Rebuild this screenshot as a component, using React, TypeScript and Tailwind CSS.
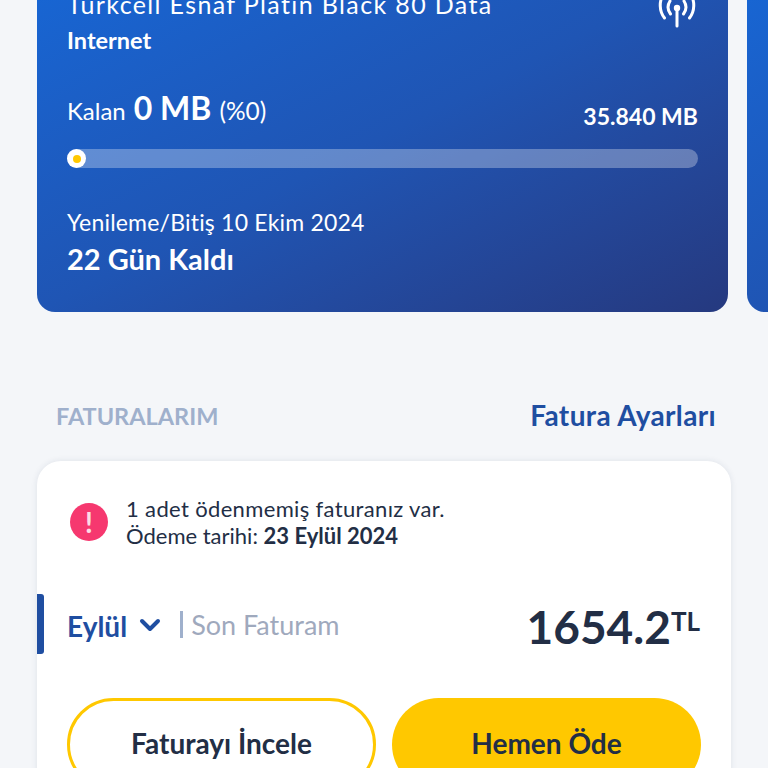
import { ChevronDown } from "lucide-react";

const fontStack = { fontFamily: "Lato, 'Noto Sans', sans-serif" };

function SignalIcon() {
  return (
    <svg width="38" height="34" viewBox="0 0 38 34" fill="none" stroke="white" strokeWidth="3" strokeLinecap="round">
      <path d="M19 13V30" />
      <circle cx="19" cy="12" r="3.2" fill="white" stroke="none" />
      <path d="M12.5 18C9.5 14 9.5 9 12 5" />
      <path d="M25.5 18C28.5 14 28.5 9 26 5" />
      <path d="M6.5 22C1 15 1 5 5.5 -2" />
      <path d="M31.5 22C37 15 37 5 32.5 -2" />
    </svg>
  );
}

function PackageCard() {
  return (
    <div className="h-[352px] w-[691px] shrink-0 rounded-b-[18px] bg-gradient-to-br from-[#1667d6] via-[#1f55b4] to-[#25397f] px-[30px] pt-[29px] text-white">
      <div className="flex items-start justify-between">
        <div>
          <p className="text-[25px] leading-[30px] tracking-[1.37px]">Turkcell Esnaf Platin Black 80 Data</p>
          <p className="mt-[6px] text-[23.5px] font-bold leading-[30px]">Internet</p>
        </div>
        <div className="mr-[2px] mt-[7px]">
          <SignalIcon />
        </div>
      </div>
      <div className="mt-[31px] flex items-end justify-between">
        <div className="flex items-baseline gap-[8px]">
          <span className="text-[24px]">Kalan</span>
          <span className="text-[32px] font-bold leading-[44px]">0 MB</span>
          <span className="text-[24.5px]">(%0)</span>
        </div>
        <span className="mb-[-2px] text-[23px] font-bold leading-[32px]">35.840 MB</span>
      </div>
      <div className="mt-[19px] h-[19px] w-full rounded-full bg-white/30">
        <div className="flex h-[19px] w-[19px] items-center justify-center rounded-full bg-white">
          <div className="h-[8px] w-[8px] rounded-full bg-[#ffc800]" />
        </div>
      </div>
      <p className="mt-[38px] text-[23px] leading-[32px] tracking-[0.2px]">Yenileme/Bitiş 10 Ekim 2024</p>
      <p className="mt-[3px] text-[29px] font-bold leading-[36px]">22 Gün Kaldı</p>
    </div>
  );
}

export default function App() {
  return (
    <div style={fontStack} className="h-[768px] w-[768px] overflow-hidden bg-[#f4f6f9]">
      <div className="mt-[-40px] flex gap-[19px] pl-[37px]">
        <PackageCard />
        <div className="h-[352px] w-[691px] shrink-0 rounded-b-[18px] bg-gradient-to-br from-[#1667d6] via-[#1f55b4] to-[#25397f]" />
      </div>

      <div className="mt-[86px] flex items-center justify-between pl-[56px] pr-[52px]">
        <span className="text-[23.5px] font-bold leading-[36px] text-[#9fb0cc]">FATURALARIM</span>
        <span className="mt-[-2px] text-[28px] font-bold leading-[36px] tracking-[0.35px] text-[#1f4ea1]">Fatura Ayarları</span>
      </div>

      <div className="ml-[37px] mt-[27px] h-[400px] w-[694px] rounded-[24px] bg-white pt-[34px] shadow-[0_0_6px_rgba(30,50,90,0.1)]">
        <div className="flex items-center gap-[18px] pl-[33px]">
          <div className="flex h-[38px] w-[38px] items-center justify-center rounded-full bg-[#f6386f] text-[28px] font-bold leading-none text-[#fbdde6]">
            !
          </div>
          <div className="text-[22px] leading-[27px] text-[#222e45]">
            <p className="tracking-[0.35px]">1 adet ödenmemiş faturanız var.</p>
            <p>
              Ödeme tarihi: <span className="font-bold">23 Eylül 2024</span>
            </p>
          </div>
        </div>

        <div className="mt-[45px] flex h-[60px] items-center pr-[31px]">
          <div className="h-[60px] w-[7px] rounded-r-[3px] bg-[#1f4ea1]" />
          <span className="ml-[23px] mt-[3px] text-[28px] font-bold text-[#1f4ea1]">Eylül</span>
          <ChevronDown className="ml-[7px] mt-[1px] text-[#1f4ea1]" size={32} strokeWidth={3} />
          <div className="ml-[14px] mt-[1px] h-[27px] w-[3px] bg-[#9fb0cc]" />
          <span className="ml-[8px] mt-[3px] text-[27px] text-[#9fa9bd]">Son Faturam</span>
          <div className="ml-auto flex items-start">
            <span className="mt-[5px] text-[46px] font-bold leading-[60px] text-[#222e45]">1654.2</span>
            <span className="mt-[14px] text-[26px] font-bold leading-[30px] text-[#222e45]">TL</span>
          </div>
        </div>

        <div className="mt-[44px] flex gap-[16px] pl-[30px]">
          <button className="h-[93px] w-[309px] rounded-full border-[3.5px] border-[#ffc800] bg-white pb-[4px] text-[28px] font-bold text-[#222e45]">
            Faturayı İncele
          </button>
          <button className="h-[93px] w-[309px] rounded-full bg-[#ffc800] pb-[4px] text-[28px] font-bold text-[#222e45]">
            Hemen Öde
          </button>
        </div>
      </div>
    </div>
  );
}
